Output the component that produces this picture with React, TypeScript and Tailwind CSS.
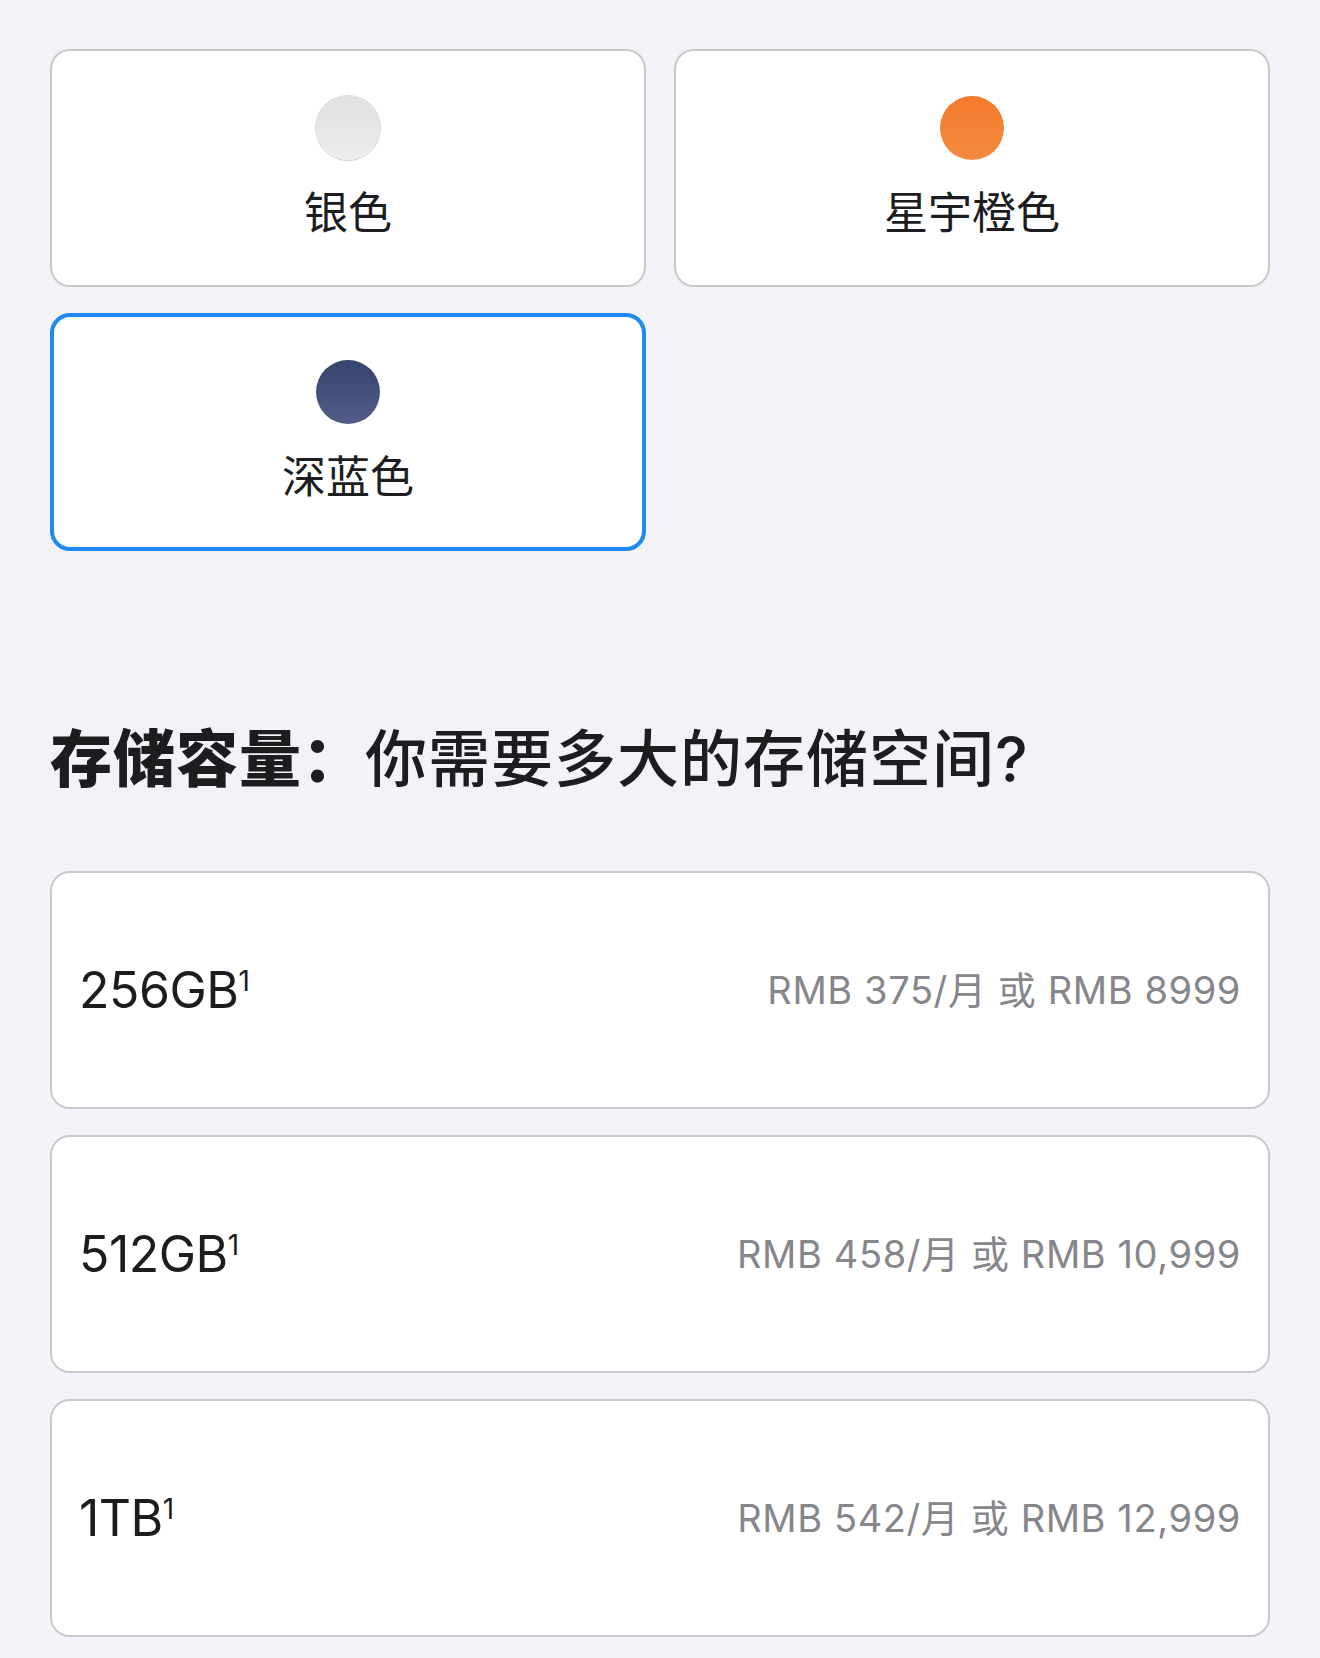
import React from "react";

const colors = [
  { name: "银色", swatch: "bg-gradient-to-b from-[#e0e0e0] to-[#ececec] ring-1 ring-[#d4d4d4]", selected: false },
  { name: "星宇橙色", swatch: "bg-gradient-to-b from-[#f37a2c] to-[#f48b40]", selected: false },
  { name: "深蓝色", swatch: "bg-gradient-to-b from-[#374470] to-[#525d88]", selected: true },
];

const storage = [
  { size: "256GB", price: "RMB 375/月 或 RMB 8999" },
  { size: "512GB", price: "RMB 458/月 或 RMB 10,999" },
  { size: "1TB", price: "RMB 542/月 或 RMB 12,999" },
];

export default function App() {
  return (
    <div
      className="min-h-[1658px] bg-[#f2f2f7] px-[50px] pt-[49px] text-[#1d1d1f]"
      style={{ fontFamily: 'Inter, "Noto Sans CJK SC", sans-serif' }}
    >
      <div className="grid grid-cols-2 gap-x-[28px] gap-y-[26px]">
        {colors.map((c) => (
          <div
            key={c.name}
            className={
              c.selected
                ? "flex h-[238px] flex-col items-center rounded-[20px] border-[4px] border-[#1f8bf0] bg-white pt-[43px]"
                : "flex h-[238px] flex-col items-center rounded-[20px] border-2 border-[#c9c9cd] bg-white pt-[45px]"
            }
          >
            <div className={`h-[64px] w-[64px] rounded-full ${c.swatch}`} />
            <div className="mt-[31px] text-[44px] leading-[44px]">{c.name}</div>
          </div>
        ))}
      </div>

      <h2 className="mt-[178px] text-[62px] leading-[62px] tracking-[1px]">
        <span className="font-black">存储容量：</span>
        <span className="font-medium">你需要多大的存储空间?</span>
      </h2>

      <div className="mt-[80px] flex flex-col gap-[26px]">
        {storage.map((s) => (
          <div
            key={s.size}
            className="flex h-[238px] items-center justify-between rounded-[20px] border-2 border-[#c9c9cd] bg-white pl-[27px] pr-[27px]"
          >
            <div className="text-[50px] leading-none tracking-[-0.5px]">
              {s.size}
              <sup className="top-[-0.6em] text-[28px]">1</sup>
            </div>
            <div className="text-[38px] leading-none tracking-[0.6px] text-[#86868b]">{s.price}</div>
          </div>
        ))}
      </div>
    </div>
  );
}
